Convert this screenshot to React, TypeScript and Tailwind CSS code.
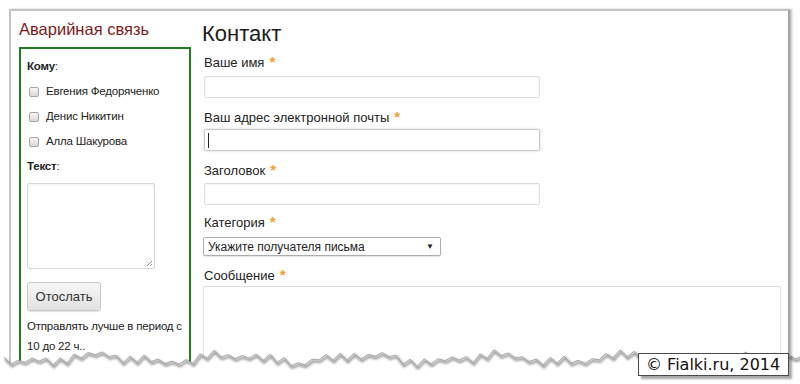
import React from "react";

const recipients = ["Евгения Федоряченко", "Денис Никитин", "Алла Шакурова"];

// zig-zag points for the torn bottom edge of the screenshot
const tear: [number, number][] = [];
for (let i = 0; i <= 114; i++) {
  const x = 4 + i * 7;
  const y =
    357 +
    3.5 * Math.sin(x / 21) +
    2 * Math.sin(x / 9.3 + 1) +
    (i % 2 === 0 ? -2.5 : 2.5) +
    ((i * 7) % 5) * 0.7;
  tear.push([x, Math.round(y * 10) / 10]);
}
const tearLine = tear.map(([x, y]) => `${x},${y}`).join(" ");
const tearShadow = tear.map(([x, y]) => `${x + 1},${y + 2}`).join(" ");
const tearFill = `0,384 0,${tear[0][1]} ${tearLine} 800,${tear[tear.length - 1][1]} 800,384`;

function Star() {
  return <span className="ml-[5px] text-[15px] font-bold text-[#f0a030]">*</span>;
}

function Checkbox() {
  return (
    <span className="inline-block h-[10px] w-[10px] rounded-[2px] border border-[#a6a6a6] bg-gradient-to-b from-[#f7f7f7] to-[#d9d9d9]" />
  );
}

function Field({ focused = false }: { focused?: boolean }) {
  return (
    <div
      className={`flex h-[22px] w-[336px] items-center rounded-[2px] border bg-white pl-[3px] ${
        focused ? "border-[#cbcbcb] shadow-[0_0_3px_rgba(0,0,0,0.18)]" : "border-[#dcdcdc] shadow-[inset_0_1px_1px_rgba(0,0,0,0.04)]"
      }`}
    >
      {focused && <span className="h-[15px] w-px bg-[#222]" />}
    </div>
  );
}

export default function App() {
  return (
    <div className="relative h-[384px] w-[800px] overflow-hidden bg-white font-['Liberation_Sans',Arial,sans-serif] text-[#222]">
      <div className="ml-[9px] mt-[9px] h-[375px] w-[781px] border-l-2 border-r-2 border-t-2 border-l-[#c6c6c6] border-r-[#a3a3a3] border-t-[#c4c4c4] shadow-[2px_0_2px_rgba(0,0,0,0.25)]">
        <div className="flex gap-[11px] pl-[8px]">
          {/* left: emergency box */}
          <div className="w-[172px] shrink-0">
            <div className="mt-[8px] text-[16.5px] leading-[20px] text-[#7d1a1a]">Аварийная связь</div>
            <div className="mt-[8px] h-[340px] border-2 border-[#1f7f1f] pl-[6px] pt-[6px] text-[11.5px] tracking-[-0.2px] text-[#222]">
              <div className="flex h-[24px] items-center">
                <b>Кому</b>:
              </div>
              {recipients.map((name) => (
                <div key={name} className="flex h-[25px] items-center gap-[7px] pl-[2px]">
                  <Checkbox />
                  <span>{name}</span>
                </div>
              ))}
              <div className="flex h-[25px] items-center">
                <b>Текст</b>:
              </div>
              <div className="relative mt-[4px] h-[86px] w-[128px] rounded-[2px] border border-[#d6d6d6] bg-white shadow-[inset_0_1px_2px_rgba(0,0,0,0.05)]">
                <svg className="absolute bottom-[1px] right-[1px]" width="7" height="7" viewBox="0 0 7 7">
                  <path d="M6 1 L1 6 M6 4 L4 6" stroke="#8a8a8a" strokeWidth="1" />
                </svg>
              </div>
              <button className="mt-[13px] h-[29px] w-[74px] rounded-[3px] border border-[#c9c9c9] bg-gradient-to-b from-[#f7f7f7] to-[#e1e1e1] text-[13px] tracking-normal text-[#333] shadow-[0_1px_1px_rgba(0,0,0,0.12)]">
                Отослать
              </button>
              <p className="mt-[5px] whitespace-nowrap leading-[20px]">
                Отправлять лучше в период с
                <br />
                10 до 22 ч..
              </p>
            </div>
          </div>

          {/* right: contact form */}
          <div className="w-[579px]">
            <h1 className="mt-[10px] text-[22px] leading-[26px] text-[#1c1c1c]">Контакт</h1>
            <div className="ml-[2px] mt-[5px] h-[20px] text-[13px] leading-[20px]">
              Ваше имя<Star />
            </div>
            <div className="ml-[2px] mt-[4px]">
              <Field />
            </div>
            <div className="ml-[2px] mt-[9px] h-[20px] text-[13px] leading-[20px]">
              Ваш адрес электронной почты<Star />
            </div>
            <div className="ml-[2px] mt-[2px]">
              <Field focused />
            </div>
            <div className="ml-[2px] mt-[9px] h-[20px] text-[13px] leading-[20px]">
              Заголовок<Star />
            </div>
            <div className="ml-[2px] mt-[3px]">
              <Field />
            </div>
            <div className="ml-[2px] mt-[7px] h-[20px] text-[13px] leading-[20px]">
              Категория<Star />
            </div>
            <div className="ml-[1px] mt-[5px] flex h-[19px] w-[238px] items-center justify-between rounded-[2px] border border-[#adadad] bg-white pl-[4px] pr-[6px] text-[12px] shadow-[0_1px_1px_rgba(0,0,0,0.1)]">
              <span>Укажите получателя письма</span>
              <span className="text-[8px] text-[#222]">▼</span>
            </div>
            <div className="ml-[2px] mt-[9px] h-[20px] text-[13px] leading-[20px]">
              Сообщение<Star />
            </div>
            <div className="ml-[1px] mt-[1px] h-[100px] w-[578px] rounded-[2px] border border-[#dedede] bg-white" />
          </div>
        </div>
      </div>

      {/* torn edge */}
      <svg className="absolute left-0 top-0" width="800" height="384" viewBox="0 0 800 384">
        <defs>
          <filter id="blur" x="-5%" y="-50%" width="110%" height="200%">
            <feGaussianBlur stdDeviation="1" />
          </filter>
        </defs>
        <polygon points={tearFill} fill="#fff" />
        <polyline points={tearShadow} fill="none" stroke="#5a5a5a" strokeWidth="2.5" opacity="0.6" filter="url(#blur)" />
        <polyline points={tearLine} fill="none" stroke="#a8a8a8" strokeWidth="1" />
      </svg>

      {/* watermark */}
      <div className="absolute left-[638px] top-[353px] flex h-[23px] w-[151px] items-center border border-[#4a4a4a] bg-white pl-[7px] font-['DejaVu_Sans',Verdana,sans-serif] text-[16px] text-[#111] shadow-[3px_3px_2px_rgba(0,0,0,0.35)]">
        © Fialki.ru, 2014
      </div>
    </div>
  );
}
